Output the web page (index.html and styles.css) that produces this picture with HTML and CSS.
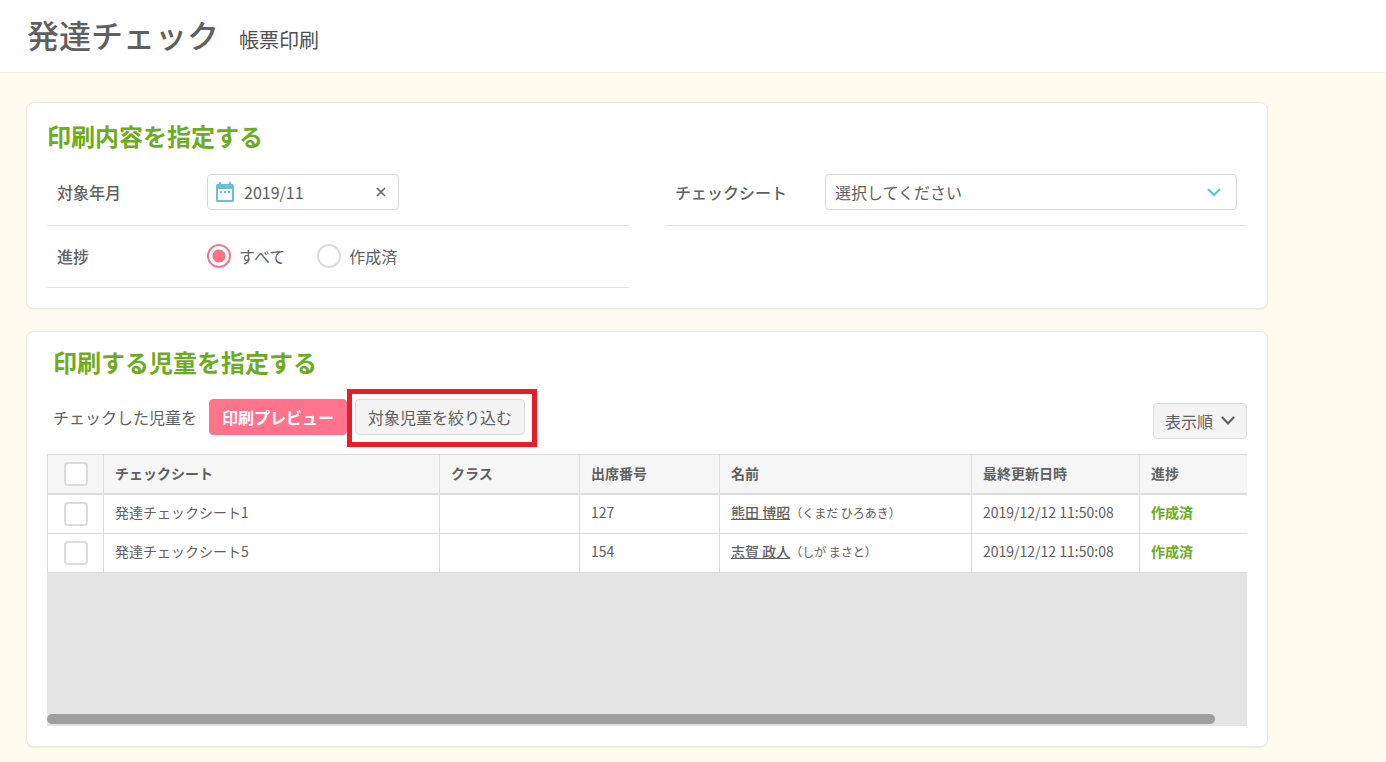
FILE: index.html
```html
<!DOCTYPE html>
<html lang="ja">
<head>
<meta charset="utf-8">
<meta name="viewport" content="width=device-width, initial-scale=1">
<title>発達チェック 帳票印刷</title>
<link rel="stylesheet" href="styles.css">
</head>
<body>
<header class="page-header">
  <h1 class="page-title">発達チェック</h1>
  <span class="page-subtitle">帳票印刷</span>
</header>
<main class="content">
  <section class="card">
    <h2 class="card-title">印刷内容を指定する</h2>
    <div class="conditions">
      <div class="field">
        <label class="field-label" for="month">対象年月</label>
        <div class="date-box">
          <svg class="date-icon" width="18" height="20" viewBox="0 0 18 20" aria-hidden="true">
            <path fill="#6bbfd3" fill-rule="evenodd" d="M3 0h2v2h8V0h2v2h1.500a1.500 1.500 0 0 1 1.500 1.500v15a1.500 1.500 0 0 1-1.500 1.500h-15A1.500 1.500 0 0 1 0 18.500v-15A1.500 1.500 0 0 1 1.500 2H3zM2 7v11h14V7zM4 9h2v2H4zM8 9h2v2H8zM12 9h2v2h-2z"/>
          </svg>
          <input class="date-input" id="month" type="text" value="2019/11">
          <button class="date-clear" type="button" aria-label="クリア">
            <svg width="10" height="10" viewBox="0 0 10 10" aria-hidden="true"><path d="M1 1l8 8M9 1L1 9" fill="none" stroke="#606060" stroke-width="1.500"/></svg>
          </button>
        </div>
      </div>
      <div class="field">
        <label class="field-label" for="sheet">チェックシート</label>
        <div class="select-box">
          <select class="select" id="sheet"><option>選択してください</option></select>
          <svg class="select-arrow" width="14" height="10" viewBox="0 0 14 10" aria-hidden="true"><path d="M1 2L7 8 13 2" fill="none" stroke="#6bbfd3" stroke-width="2.400"/></svg>
        </div>
      </div>
      <div class="field field-radio" role="radiogroup" aria-labelledby="progress-label">
        <span class="field-label" id="progress-label">進捗</span>
        <label class="radio"><input class="radio-input" type="radio" name="progress" checked>すべて</label>
        <label class="radio"><input class="radio-input" type="radio" name="progress">作成済</label>
      </div>
    </div>
  </section>

  <section class="card card-children">
    <h2 class="card-title card-title-inset">印刷する児童を指定する</h2>
    <div class="toolbar">
      <span class="toolbar-text">チェックした児童を</span>
      <button class="button button-primary" type="button">印刷プレビュー</button>
      <div class="highlighted">
        <button class="button" type="button">対象児童を絞り込む</button>
        <span class="highlight-frame"></span>
      </div>
      <button class="button button-sort" type="button">表示順
        <svg width="14" height="10" viewBox="0 0 14 10" aria-hidden="true"><path d="M1 1L7 7.500 13 1" fill="none" stroke="#606060" stroke-width="2.200"/></svg>
      </button>
    </div>
    <div class="table-area">
      <table class="table">
        <colgroup>
          <col class="col-check"><col class="col-sheet"><col class="col-class"><col class="col-number"><col class="col-name"><col class="col-date"><col>
        </colgroup>
        <thead>
          <tr>
            <th class="cell-check"><input class="checkbox" type="checkbox" aria-label="すべて選択"></th>
            <th>チェックシート</th><th>クラス</th><th>出席番号</th><th>名前</th><th>最終更新日時</th><th>進捗</th>
          </tr>
        </thead>
        <tbody>
          <tr>
            <td class="cell-check"><input class="checkbox" type="checkbox" aria-label="熊田 博昭を選択"></td>
            <td>発達チェックシート1</td><td></td><td>127</td>
            <td><a class="name" href="#">熊田 博昭</a><span class="kana">（くまだ ひろあき）</span></td>
            <td>2019/12/12 11:50:08</td><td class="done">作成済</td>
          </tr>
          <tr>
            <td class="cell-check"><input class="checkbox" type="checkbox" aria-label="志賀 政人を選択"></td>
            <td>発達チェックシート5</td><td></td><td>154</td>
            <td><a class="name" href="#">志賀 政人</a><span class="kana">（しが まさと）</span></td>
            <td>2019/12/12 11:50:08</td><td class="done">作成済</td>
          </tr>
        </tbody>
      </table>
      <div class="scroll-track"><div class="scroll-thumb"></div></div>
    </div>
  </section>
</main>
</body>
</html>
```
FILE: styles.css
```css
* { box-sizing: border-box; }

body {
  margin: 0;
  background: #fffbee;
  color: #606060;
  font-family: "Noto Sans CJK JP", sans-serif;
  font-size: 16px;
  line-height: 24px;
}

button, input, select { font: inherit; color: inherit; margin: 0; }

.page-header {
  display: flex;
  align-items: baseline;
  gap: 20px;
  padding: 10px 27px 14px;
  background: #fff;
  border-bottom: 1px solid #efede6;
}

.page-title { margin: 0; font-size: 32px; line-height: 48px; font-weight: 500; }
.page-subtitle { font-size: 20px; color: #505050; }

.content {
  display: flex;
  flex-direction: column;
  gap: 22px;
  margin: 29px 118px 15px 26px;
}

.card {
  padding: 15px 20px 20px;
  background: #fff;
  border: 1px solid #ecebe0;
  border-radius: 8px;
  box-shadow: 0 1px 2px rgba(0, 0, 0, 0.06);
}

.card-children { padding-top: 12px; }

.card-title {
  margin: 0;
  font-size: 24px;
  line-height: 36px;
  font-weight: 700;
  color: #6cac20;
}

.card-title-inset { padding-left: 6px; }

.conditions {
  display: grid;
  grid-template-columns: 1fr 1fr;
  column-gap: 36px;
  padding-top: 9px;
}

.field {
  display: flex;
  align-items: center;
  padding: 11px 10px 15px;
  border-bottom: 1px solid #e6e6e6;
}

.field-radio { padding: 18px 10px 19px; }
.field-label { width: 150px; font-weight: 500; }

.date-box {
  display: flex;
  align-items: center;
  width: 192px;
  height: 36px;
  padding: 0 12px 0 8px;
  border: 1px solid #d8d8d8;
  border-radius: 4px;
}

.date-icon { flex: none; }

.date-input {
  flex: 1;
  min-width: 0;
  padding: 0 0 0 10px;
  border: 0;
  background: none;
  outline: 0;
}

.date-clear { display: flex; padding: 0; border: 0; background: none; }

.select-box { position: relative; flex: 1; }

.select {
  display: block;
  width: 100%;
  height: 36px;
  padding: 0 40px 0 9px;
  border: 1px solid #d8d8d8;
  border-radius: 4px;
  background: #fff;
  appearance: none;
}

.select-arrow { position: absolute; right: 16px; top: 13px; pointer-events: none; }

.radio { display: flex; align-items: center; gap: 8px; margin-right: 32px; }

.radio-input {
  width: 24px;
  height: 24px;
  border: 2px solid #dcdcdc;
  border-radius: 50%;
  background: #fff;
  appearance: none;
}

.radio-input:checked {
  border-color: #f07a92;
  background: radial-gradient(circle, #ff7189 6px, #fff 7px);
}

.toolbar { display: flex; align-items: flex-start; padding: 19px 0 15px 6px; }
.toolbar-text { width: 156px; line-height: 36px; }

.button {
  height: 36px;
  padding: 0 12px;
  border: 1px solid #dcdcdc;
  border-radius: 4px;
  background: #f4f4f4;
  white-space: nowrap;
}

.button-primary {
  border-color: #ff738c;
  background: #ff738c;
  color: #fff;
  font-weight: 700;
}

.highlighted { position: relative; display: flex; margin-left: 8px; }

.highlight-frame {
  position: absolute;
  inset: -10px -12px -12px -8px;
  border: 5px solid #e71f25;
  pointer-events: none;
}

.button-sort {
  display: flex;
  align-items: center;
  gap: 8px;
  margin: 4px 0 0 auto;
  padding: 0 11px;
}

.table-area { background: #e4e4e4; }

.table {
  width: 100%;
  table-layout: fixed;
  border-collapse: separate;
  border-spacing: 0;
  background: #fff;
  font-size: 14px;
  line-height: 20px;
}

.col-check { width: 56px; }
.col-sheet { width: 28%; }
.col-class, .col-number { width: 140px; }
.col-name { width: 252px; }
.col-date { width: 168px; }

.table th, .table td {
  height: 39px;
  padding: 0 0 4px 11px;
  border-left: 1px solid #dcdcdc;
  border-bottom: 1px solid #dcdcdc;
  text-align: left;
}

.table th {
  height: 41px;
  padding-bottom: 2px;
  border-top: 1px solid #dcdcdc;
  border-bottom-width: 2px;
  background: #f6f6f6;
  font-weight: 700;
}

.table .cell-check { padding: 0; text-align: center; }

.table .done { color: #6cac20; font-weight: 700; }

.checkbox {
  display: block;
  width: 24px;
  height: 24px;
  margin: 0 auto;
  border: 2px solid #dcdcdc;
  border-radius: 4px;
  background: #fff;
  appearance: none;
}

.name { color: inherit; font-weight: 500; }
.kana { font-size: 12px; }

.scroll-track { padding: 141px 32px 2px 0; }
.scroll-thumb { height: 10px; border-radius: 5px; background: #9f9f9f; }
```
